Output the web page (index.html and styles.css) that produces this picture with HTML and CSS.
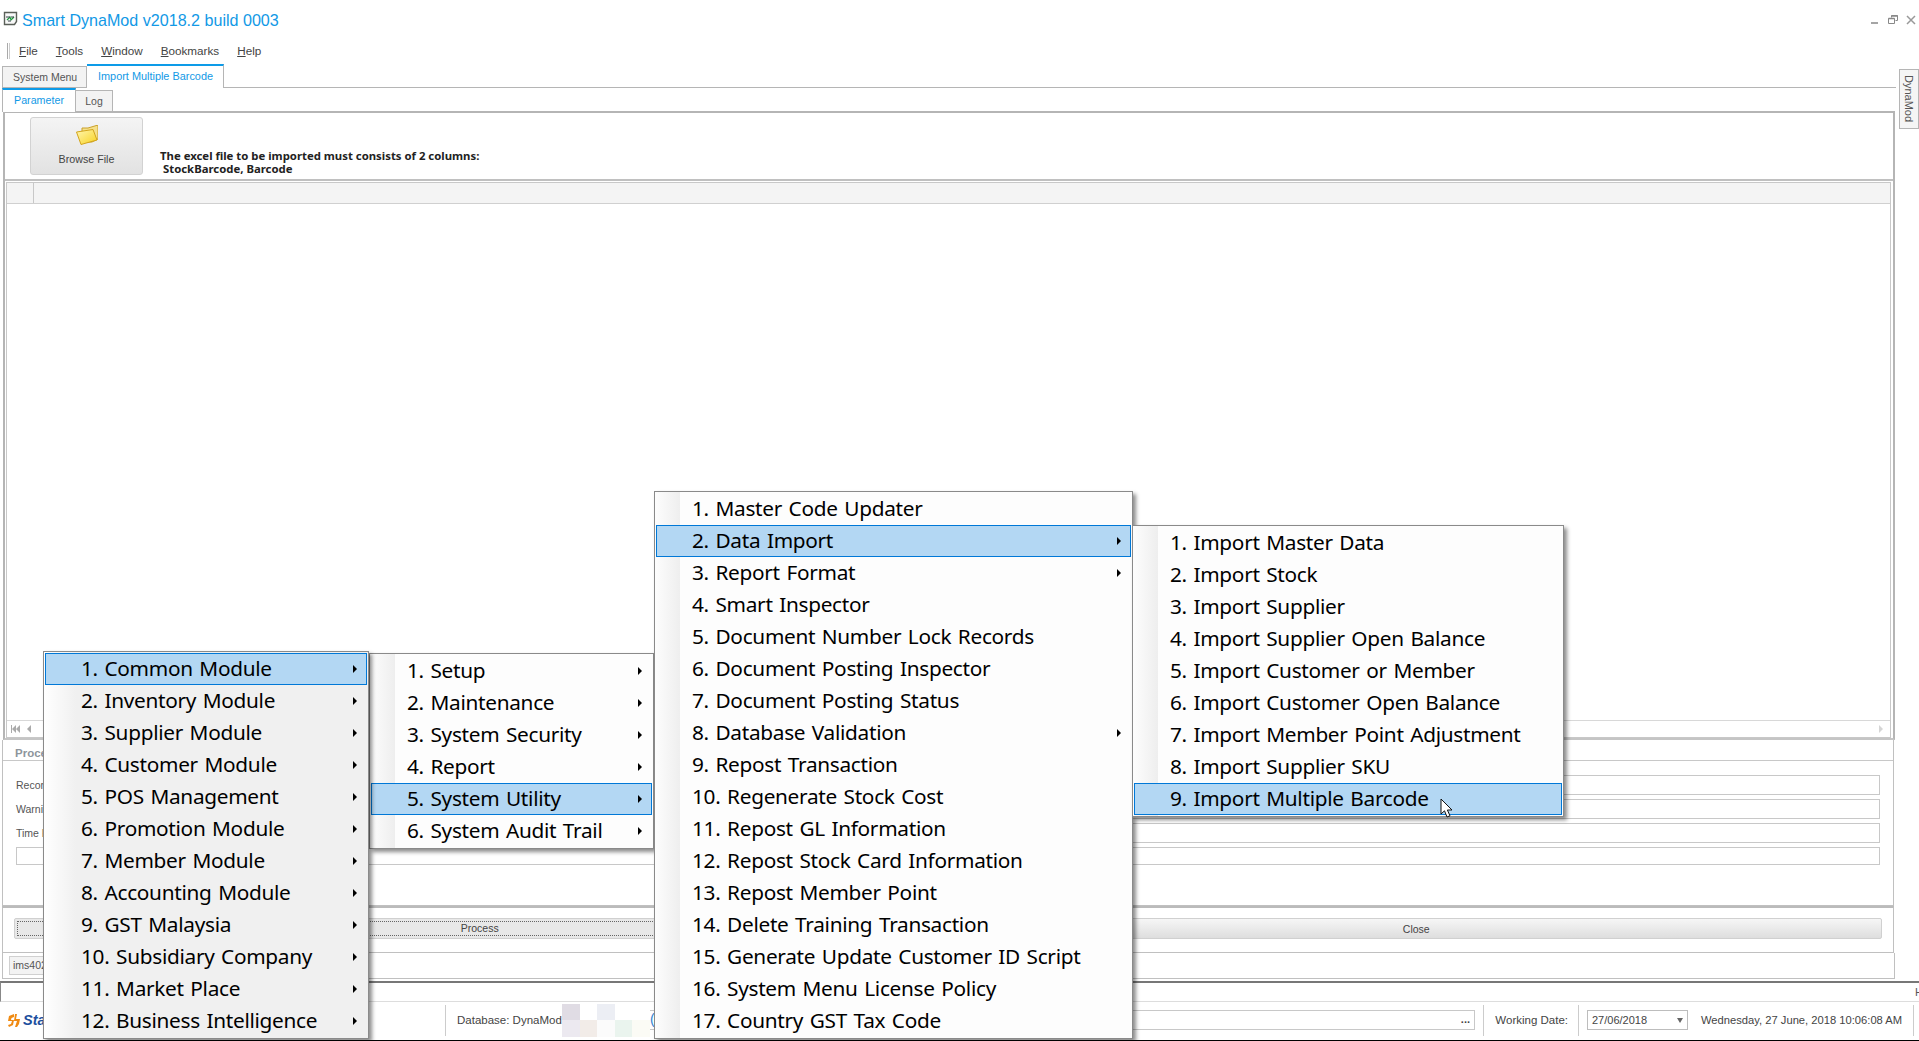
FILE: index.html
```html
<!DOCTYPE html>
<html lang="en">
<head>
<meta charset="utf-8">
<title>Smart DynaMod</title>
<link rel="stylesheet" href="styles.css">
</head>
<body>
<div class="app">
  <header class="titlebar">
    <svg class="appicon" width="15" height="15" viewBox="0 0 15 15"><path d="M1.5 1.5h12v9l-2 3h-10z" fill="#f8f8f8" stroke="#5a5f58" stroke-width="1.4"/><path d="M4 9l3-3 1 3 3-3" fill="none" stroke="#1d9a3c" stroke-width="1.2"/><path d="M3 6h4M8 6h3M5 10h3" stroke="#39424a"/></svg>
    <span class="apptitle">Smart DynaMod v2018.2 build 0003</span>
    <div class="winctl">
      <svg width="10" height="10" viewBox="0 0 10 10"><rect x="1" y="7" width="7" height="2" fill="#a5a5a5"/></svg>
      <svg width="10" height="10" viewBox="0 0 10 10"><path d="M3.5 2.5V.5h6v5h-2M.5 3.5h6v5h-6z" fill="none" stroke="#888"/><path d="M.5 3.5h6M3.5 1h6" stroke="#888" stroke-width="1.4" fill="none"/></svg>
      <svg width="10" height="10" viewBox="0 0 10 10"><path d="M1 1l8 8M9 1l-8 8" stroke="#999" stroke-width="1.5"/></svg>
    </div>
  </header>
  <nav class="menubar">
    <i class="grip"></i>
    <span class="mi"><u>F</u>ile</span><span class="mi"><u>T</u>ools</span><span class="mi"><u>W</u>indow</span><span class="mi"><u>B</u>ookmarks</span><span class="mi"><u>H</u>elp</span>
  </nav>
  <div class="main">
    <div class="workspace">
      <div class="tabs">
        <span class="tab">System Menu</span>
        <span class="tab active">Import Multiple Barcode</span>
      </div>
      <div class="subtabs">
        <span class="subtab active">Parameter</span>
        <span class="subtab">Log</span>
      </div>
      <section class="panel">
        <div class="toolbar">
          <button class="browse">
            <svg width="22" height="20" viewBox="0 0 22 20"><defs><linearGradient id="fold" x1="0" y1="0" x2="1" y2="1"><stop offset="0" stop-color="#fff6b0"/><stop offset="1" stop-color="#f8d21e"/></linearGradient></defs><path d="M6 3h6l10-3v14l-6 3H6z" fill="#f5e08a" stroke="#c9a02a"/><path d="M.5 7L17 4.5 21 15 5 19.5z" fill="url(#fold)" stroke="#d2a41c"/></svg>
            <span>Browse File</span>
          </button>
          <p class="note">The excel file to be imported must consists of 2 columns:<br><span class="note2">StockBarcode, Barcode</span></p>
        </div>
        <div class="grid">
          <div class="gridhead"><i class="gridcell"></i></div>
          <div class="gridbody"></div>
          <div class="gridnav">
            <svg width="9" height="8" viewBox="0 0 9 8"><path d="M.5 0v8" stroke="#aaa"/><path d="M5 0v8L1 4zM9 0v8L5 4z" fill="#aaa"/></svg>
            <svg class="navprev" width="4" height="8" viewBox="0 0 4 8"><path d="M4 0v8L0 4z" fill="#aaa"/></svg>
            <span class="navtext">Record</span>
            <svg class="navright" width="4" height="8" viewBox="0 0 4 8"><path d="M0 0v8l4-4z" fill="#d5d5d5"/></svg>
          </div>
        </div>
      </section>
      <section class="process">
        <div class="prochead">Process</div>
        <div class="procrow"><label>Record</label><i class="field"></i></div>
        <div class="procrow"><label>Warning</label><i class="field"></i></div>
        <div class="procrow"><label>Time Elapsed</label><i class="field"></i></div>
        <div class="progress"></div>
      </section>
      <section class="actions">
        <button class="btn focus"><span>Process</span></button>
        <button class="btn"><span>Close</span></button>
      </section>
      <section class="infobar"><span class="ims">ims402</span></section>
    </div>
    <aside class="dock"><span>DynaMod</span></aside>
  </div>
  <div class="strip"><span>H</span></div>
  <footer class="status">
    <div class="logo">
      <svg width="13" height="13" viewBox="0 0 13 13"><path d="M6 0L1 2 0 7h4l-1 3-3 1 1 2 4-2 1-5H3l.5-2L6 3zM7 0h2L8 5h4l-1 5-2 3H7l2-6H6z" fill="#f08a12"/></svg>
      <span>Star</span>
    </div>
    <div class="sep s1"></div>
    <span class="db">Database: DynaMod</span>
    <div class="mosaic"><i class="m1"></i><i></i><i class="m2"></i><i></i><i></i><i class="m3"></i><i class="m4"></i><i class="m5"></i><i class="m6"></i><i class="m7"></i></div>
    <div class="pathbox"><span class="paren">(</span><span>...</span></div>
    <div class="sep"></div>
    <span class="wd">Working Date:</span>
    <div class="sep"></div>
    <div class="datebox"><span>27/06/2018</span><i class="caret"></i></div>
    <span class="now">Wednesday, 27 June, 2018 10:06:08 AM</span>
    <div class="sep"></div>
  </footer>
</div>

<div class="menu m-a">
  <div class="item hot sub">1. Common Module</div>
  <div class="item sub">2. Inventory Module</div>
  <div class="item sub">3. Supplier Module</div>
  <div class="item sub">4. Customer Module</div>
  <div class="item sub">5. POS Management</div>
  <div class="item sub">6. Promotion Module</div>
  <div class="item sub">7. Member Module</div>
  <div class="item sub">8. Accounting Module</div>
  <div class="item sub">9. GST Malaysia</div>
  <div class="item sub">10. Subsidiary Company</div>
  <div class="item sub">11. Market Place</div>
  <div class="item sub">12. Business Intelligence</div>
</div>
<div class="menu m-b">
  <div class="item sub">1. Setup</div>
  <div class="item sub">2. Maintenance</div>
  <div class="item sub">3. System Security</div>
  <div class="item sub">4. Report</div>
  <div class="item hot sub">5. System Utility</div>
  <div class="item sub">6. System Audit Trail</div>
</div>
<div class="menu m-c">
  <div class="item">1. Master Code Updater</div>
  <div class="item hot sub">2. Data Import</div>
  <div class="item sub">3. Report Format</div>
  <div class="item">4. Smart Inspector</div>
  <div class="item">5. Document Number Lock Records</div>
  <div class="item">6. Document Posting Inspector</div>
  <div class="item">7. Document Posting Status</div>
  <div class="item sub">8. Database Validation</div>
  <div class="item">9. Repost Transaction</div>
  <div class="item">10. Regenerate Stock Cost</div>
  <div class="item">11. Repost GL Information</div>
  <div class="item">12. Repost Stock Card Information</div>
  <div class="item">13. Repost Member Point</div>
  <div class="item">14. Delete Training Transaction</div>
  <div class="item">15. Generate Update Customer ID Script</div>
  <div class="item">16. System Menu License Policy</div>
  <div class="item">17. Country GST Tax Code</div>
</div>
<div class="menu m-d">
  <div class="item">1. Import Master Data</div>
  <div class="item">2. Import Stock</div>
  <div class="item">3. Import Supplier</div>
  <div class="item">4. Import Supplier Open Balance</div>
  <div class="item">5. Import Customer or Member</div>
  <div class="item">6. Import Customer Open Balance</div>
  <div class="item">7. Import Member Point Adjustment</div>
  <div class="item">8. Import Supplier SKU</div>
  <div class="item hot">9. Import Multiple Barcode</div>
</div>
<svg class="cursor" width="14" height="21" viewBox="0 0 14 21"><path d="M1 1v15l3.5-3.2L7 19l3-1.2-2.6-5.8H12z" fill="#fff" stroke="#111" stroke-width="1"/></svg>
</body>
</html>
```
FILE: styles.css
```css
* { box-sizing: border-box; }
html, body { margin: 0; height: 100%; overflow: hidden; background: #fff; }
body { font: 11px "Liberation Sans", Arial, sans-serif; color: #444; }
.app { width: 1919px; height: 1041px; display: flex; flex-direction: column; overflow: hidden; position: relative; }

.titlebar { height: 41px; flex: none; display: flex; align-items: flex-start; padding: 11px 0 0 3px; }
.appicon { flex: none; }
.apptitle { margin-left: 4px; font-size: 16.1px; line-height: 18px; color: #1299e6; }
.winctl { margin-left: auto; display: flex; gap: 8px; padding: 4px 3px 0 0; }

.menubar { height: 19px; margin-bottom: 4px; flex: none; display: flex; align-items: center; padding-left: 7px; }
.grip { width: 3px; height: 16px; border-left: 1px solid #aaa; border-right: 1px solid #ccc; margin-right: 9px; }
.mi { margin-right: 18px; font-size: 11.7px; color: #444; }

.main { flex: 1; display: flex; min-height: 0; }
.workspace { width: 1896px; padding-left: 2px; display: flex; flex-direction: column; }
.dock { margin-top: 5px; margin-left: 3px; width: 20px; height: 60px; border: 1px solid #b5b5b5; background: #f5f5f5; display: flex; justify-content: center; padding-top: 5px; }
.dock span { writing-mode: vertical-rl; font-size: 11px; color: #555; }

.tabs { height: 24px; flex: none; display: flex; align-items: flex-end; border-bottom: 1px solid #b5b5b5; }
.tab { height: 21px; padding: 0 10px; line-height: 20px; background: #f3f3f3; border: 1px solid #b5b5b5; border-bottom: 0; color: #555; width: 85px; white-space: nowrap; font-size: 10.5px; }
.tab.active { height: 24px; width: 137px; background: #fff; border-top: 2px solid #0d9be8; border-left: 0; color: #1299e6; padding: 0 11px; line-height: 21px; margin-bottom: -1px; font-size: 10.9px; }

.subtabs { height: 23px; flex: none; display: flex; align-items: flex-start; margin-left: 0; }
.subtab { height: 22px; margin-top: 2px; width: 37px; text-align: center; line-height: 21px; background: #f3f3f3; border: 1px solid #b5b5b5; border-left: 0; color: #555; font-size: 10.5px; }
.subtab.active { height: 24px; margin-top: 0; width: 74px; background: #fff; border-top: 2px solid #0d9be8; border-left: 1px solid #b5b5b5; border-bottom: 0; color: #1299e6; line-height: 20px; position: relative; z-index: 1; font-size: 10.7px; }

.panel { height: 629px; flex: none; margin-left: 1px; width: 1892px; border: 2px solid #b5b5b5; border-bottom: 2px solid #c5c5c5; display: flex; flex-direction: column; }
.toolbar { height: 68px; flex: none; display: flex; align-items: flex-start; padding: 4px 0 0 25px; border-bottom: 2px solid #c0c0c0; }
.browse { width: 113px; height: 58px; flex: none; display: flex; flex-direction: column; align-items: center; padding: 7px 0 0; gap: 8px; background: linear-gradient(#f4f4f4, #e2e2e2); border: 1px solid #d2d2d2; border-radius: 3px; font: 10.7px "Liberation Sans", Arial, sans-serif; color: #444; }
.note { margin: 32px 0 0 17px; font: bold 11.35px/13px "Noto Sans", sans-serif; color: #222; }
.note2 { margin-left: 3px; }

.grid { flex: 1; margin-top: 1px; display: flex; flex-direction: column; border: 1px solid #c8c8c8; margin-right: 2px; margin-left: 1px; min-height: 0; }
.gridhead { height: 21px; flex: none; background: #f4f4f4; border-bottom: 1px solid #d0d0d0; }
.gridcell { display: block; width: 27px; height: 100%; border-right: 1px solid #c8c8c8; }
.gridbody { flex: 1; background: #fff; }
.gridnav { height: 17px; flex: none; border-top: 1px solid #d8d8d8; display: flex; align-items: center; padding-left: 4px; font-size: 11px; color: #888; }
.navprev { margin: 0 12px 0 7px; }
.navright { margin-left: auto; margin-right: 7px; }

.process { height: 166px; flex: none; width: 1892px; border: 1px solid #c0c0c0; border-top: 0; display: flex; flex-direction: column; padding: 0 13px; }
.prochead { height: 21px; flex: none; margin: 0 -13px 14px; padding: 6px 0 0 12px; border-bottom: 1px solid #c8c8c8; font: bold 11.5px/14px "Liberation Sans", sans-serif; color: #8e959c; }
.procrow { height: 20px; flex: none; margin-bottom: 4px; display: flex; align-items: center; font-size: 10.5px; color: #555; }
.procrow label { width: 90px; flex: none; }
.field { flex: 1; height: 20px; border: 1px solid #c8c8c8; }
.progress { height: 18px; flex: none; border: 1px solid #c8c8c8; }

.actions { height: 47px; flex: none; width: 1892px; border: 1px solid #c0c0c0; border-top: 2px solid #bbb; border-bottom: 1px solid #c0c0c0; display: grid; grid-template-columns: 1fr 1fr; gap: 5px; padding: 10px 11px 14px 11px; }
.btn { height: 21px; padding: 0; background: linear-gradient(#f6f6f6, #dedede); border: 1px solid #d0d0d0; border-radius: 2px; font: 10.5px "Liberation Sans", Arial, sans-serif; color: #444; }
.btn.focus { background: #e8e8e8; }
.btn.focus span { display: block; height: 15px; margin: 2px; border: 1px dotted #666; line-height: 13px; }

.infobar { height: 26px; flex: none; width: 1893px; border: 1px solid #c0c0c0; border-top: 0; padding: 3px 0 0 6px; }
.ims { display: block; width: 60px; height: 19px; background: #f3f3f3; border: 1px solid #d0d0d0; padding: 2px 3px; font-size: 10.5px; color: #555; }

.strip { height: 21px; flex: none; border-top: 2px solid #777; border-left: 1px solid #888; border-bottom: 1px solid #ddd; display: flex; justify-content: flex-end; align-items: center; color: #555; overflow: hidden; }
.strip span { margin-right: -4px; }
.status { height: 39px; flex: none; display: flex; align-items: center; border-bottom: 1px solid #000; padding: 0 6px 2px 8px; position: relative; }
.logo { width: 437px; flex: none; display: flex; align-items: center; gap: 2px; font: italic bold 14.5px "Liberation Sans", Arial, sans-serif; color: #1d4f9e; }
.sep { width: 1px; height: 31px; flex: none; background: #ccc; margin: 0 8px; }
.s1 { margin: 0 11px 0 0; }
.db { width: 105px; flex: none; font-size: 11.5px; white-space: nowrap; overflow: hidden; color: #444; }
.mosaic { width: 88px; height: 33px; flex: none; display: grid; grid-template-columns: repeat(5, 1fr); grid-template-rows: 1fr 1fr; }
.m1 { background: #e0dce4; }
.m2 { background: #eceef4; }
.m3 { background: #ece9f0; }
.m4 { background: #f2ece8; }
.m5 { background: #fbfbfb; }
.m6 { background: #eaf4ee; }
.m7 { background: #fbfbf5; }
.pathbox { width: 825px; height: 20px; flex: none; border: 1px solid #c8c8c8; border-left: 0; display: flex; justify-content: space-between; padding-right: 4px; font-weight: bold; line-height: 16px; }
.paren { color: #2f7fd0; font-weight: normal; font-size: 14px; }
.wd { width: 78px; flex: none; font-size: 11.5px; text-align: right; padding-right: 2px; white-space: nowrap; }
.datebox { width: 101px; height: 20px; flex: none; border: 1px solid #bdbdbd; display: flex; align-items: center; justify-content: space-between; padding: 0 4px; font-size: 11px; }
.caret { width: 0; height: 0; border: 3px solid transparent; border-top: 5px solid #666; border-bottom: 0; }
.now { margin-left: 13px; width: 204px; flex: none; font-size: 11.2px; white-space: nowrap; }

.menu { position: absolute; z-index: 2; border: 1px solid #8a8a8a; padding: 1px; background-color: #fdfdfd; background-image: linear-gradient(to right, #fdfdfd, #eeeeee); background-repeat: no-repeat; background-size: 25px 100%; box-shadow: 3px 3px 4px rgba(0,0,0,.45); font: 20.8px "Noto Sans", sans-serif; letter-spacing: -0.3px; word-spacing: 1.5px; color: #000; }
.m-a { left: 43px; top: 651px; width: 326px; z-index: 3; background-color: #f0f0f0; background-image: linear-gradient(to right, #fff, #f0f0f0); background-size: 32px 100%; }
.m-b { left: 369px; top: 653px; width: 285px; }
.m-c { left: 654px; top: 491px; width: 479px; }
.m-d { left: 1132px; top: 525px; width: 432px; }
.item { height: 32px; line-height: 29px; padding: 0 9px 1px 35px; border: 1px solid transparent; white-space: nowrap; display: flex; justify-content: space-between; align-items: center; }
.hot { background: #b3d7f3; border-color: #0078d7; }
.sub::after { content: ""; width: 0; height: 0; border: 4px solid transparent; border-left: 4px solid #000; border-right: 0; }
.cursor { position: absolute; z-index: 4; left: 1440px; top: 798px; }
```
